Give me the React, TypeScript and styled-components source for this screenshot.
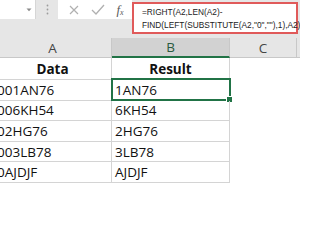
import React from "react";
import styled, { createGlobalStyle } from "styled-components";

const GlobalStyle = createGlobalStyle`
  html, body {
    margin: 0;
    padding: 0;
    background: #ffffff;
  }
  body {
    width: 300px;
    height: 200px;
    overflow: hidden;
    font-family: "Open Sans", "Liberation Sans", sans-serif;
  }
`;

type Row = { data: string; result: string; bold?: boolean; height: number };

const ROWS: Row[] = [
  { data: "Data", result: "Result", bold: true, height: 22 },
  { data: "001AN76", result: "1AN76", height: 20.6 },
  { data: "006KH54", result: "6KH54", height: 20.6 },
  { data: "02HG76", result: "2HG76", height: 20.6 },
  { data: "003LB78", result: "3LB78", height: 20.6 },
  { data: "0AJDJF", result: "AJDJF", height: 20.6 },
];

const App = () => {
  return (
    <>
      <GlobalStyle />
      <Page>
        <FormulaBar>
          <NameBox>
            <svg width="6" height="4" viewBox="0 0 6 4">
              <path d="M0.5 0.5 L3 3.2 L5.5 0.5 Z" fill="#8a8a8a" />
            </svg>
          </NameBox>
          <Grip>
            <svg width="3" height="11" viewBox="0 0 3 11">
              <circle cx="1.5" cy="1.5" r="0.9" fill="#9c9c9c" />
              <circle cx="1.5" cy="5.5" r="0.9" fill="#9c9c9c" />
              <circle cx="1.5" cy="9.5" r="0.9" fill="#9c9c9c" />
            </svg>
          </Grip>
          <Buttons>
            <IconSlot>
              <svg width="10" height="10" viewBox="0 0 10 10">
                <path
                  d="M1 1 L9 9 M9 1 L1 9"
                  stroke="#b0b0b0"
                  strokeWidth="1.2"
                  fill="none"
                />
              </svg>
            </IconSlot>
            <IconSlot>
              <svg width="14" height="11" viewBox="0 0 14 11">
                <path
                  d="M1 6 L5 10 L13 1"
                  stroke="#b0b0b0"
                  strokeWidth="1.3"
                  fill="none"
                />
              </svg>
            </IconSlot>
            <Fx>
              f<sub>x</sub>
            </Fx>
          </Buttons>
          <FormulaBox>
            <div>=RIGHT(A2,LEN(A2)-</div>
            <div>FIND(LEFT(SUBSTITUTE(A2,"0",""),1),A2)</div>
          </FormulaBox>
        </FormulaBar>

        <Sheet>
          <HeaderRow>
            <HeaderCell $width={118}>A</HeaderCell>
            <HeaderCell $width={118} $selected>
              B
            </HeaderCell>
            <HeaderCell $width={67}>C</HeaderCell>
            <HeaderCell $width={40} />
          </HeaderRow>
          {ROWS.map((row, i) => (
            <GridRow key={i} style={{ height: row.height }}>
              <Cell $bold={row.bold}>{row.data}</Cell>
              <Cell $bold={row.bold}>
                {row.result}
                {i === 1 && (
                  <Selection>
                    <FillHandle />
                  </Selection>
                )}
              </Cell>
              <EmptyCell />
            </GridRow>
          ))}
        </Sheet>
      </Page>
    </>
  );
};

export default App;

const Page = styled.div`
  width: 300px;
  height: 200px;
  overflow: hidden;
  background: #ffffff;
`;

const FormulaBar = styled.div`
  display: flex;
  align-items: flex-start;
  height: 38px;
  background: #e6e6e6;
`;

const NameBox = styled.div`
  width: 36px;
  height: 19px;
  box-sizing: border-box;
  background: #ffffff;
  display: flex;
  align-items: center;
  justify-content: flex-end;
  padding-right: 3px;
  border-right: 1px solid #d6d6d6;
`;

const Grip = styled.div`
  width: 22px;
  height: 19px;
  display: flex;
  align-items: center;
  justify-content: center;
`;

const Buttons = styled.div`
  width: 74px;
  height: 19px;
  background: #ffffff;
  display: flex;
  align-items: center;
  padding-left: 4px;
  box-sizing: border-box;
`;

const IconSlot = styled.div`
  width: 24px;
  display: flex;
  align-items: center;
  justify-content: center;
`;

const Fx = styled.div`
  width: 20px;
  text-align: center;
  font-family: "Liberation Serif", serif;
  font-style: italic;
  font-size: 13px;
  color: #5a5a5a;
  line-height: 1;

  sub {
    font-size: 8px;
    vertical-align: -1px;
  }
`;

const FormulaBox = styled.div`
  margin-top: 2px;
  width: 166px;
  height: 32px;
  box-sizing: border-box;
  border: 2px solid #e05a5a;
  background: #ffffff;
  padding: 2px 0 0 8px;
  font-family: "Liberation Sans", sans-serif;
  font-size: 8.3px;
  line-height: 13px;
  color: #222222;
  white-space: nowrap;
`;

const Sheet = styled.div`
  margin-left: -6px;
`;

const HeaderRow = styled.div`
  display: flex;
  height: 20px;
  box-sizing: border-box;
  background: #e6e6e6;
  border-bottom: 1px solid #c8c8c8;
`;

const HeaderCell = styled.div<{ $width: number; $selected?: boolean }>`
  flex: 0 0 ${(p) => p.$width}px;
  box-sizing: border-box;
  display: flex;
  align-items: center;
  justify-content: center;
  font-size: 13.5px;
  color: ${(p) => (p.$selected ? "#2b5a40" : "#444444")};
  background: ${(p) => (p.$selected ? "#d2d2d2" : "transparent")};
  border-right: 1px solid #c8c8c8;
  border-bottom: ${(p) => (p.$selected ? "2px solid #217346" : "none")};
  margin-bottom: ${(p) => (p.$selected ? "-1px" : "0")};
`;

const GridRow = styled.div`
  display: flex;
`;

const Cell = styled.div<{ $bold?: boolean }>`
  position: relative;
  flex: 0 0 118px;
  box-sizing: border-box;
  display: flex;
  align-items: center;
  justify-content: ${(p) => (p.$bold ? "center" : "flex-start")};
  padding-left: ${(p) => (p.$bold ? "0" : "3px")};
  font-size: 13.5px;
  font-weight: ${(p) => (p.$bold ? 700 : 400)};
  color: #111111;
  white-space: nowrap;
  border-right: 1px solid #d4d4d4;
  border-bottom: 1px solid #d4d4d4;
`;

const EmptyCell = styled.div`
  flex: 1;
  background: #ffffff;
`;

const Selection = styled.div`
  position: absolute;
  top: -2px;
  left: -1px;
  right: -2px;
  bottom: -1px;
  border: 2px solid #217346;
  pointer-events: none;
`;

const FillHandle = styled.div`
  position: absolute;
  right: -4px;
  bottom: -4px;
  width: 5px;
  height: 5px;
  background: #217346;
  border: 1px solid #ffffff;
`;
